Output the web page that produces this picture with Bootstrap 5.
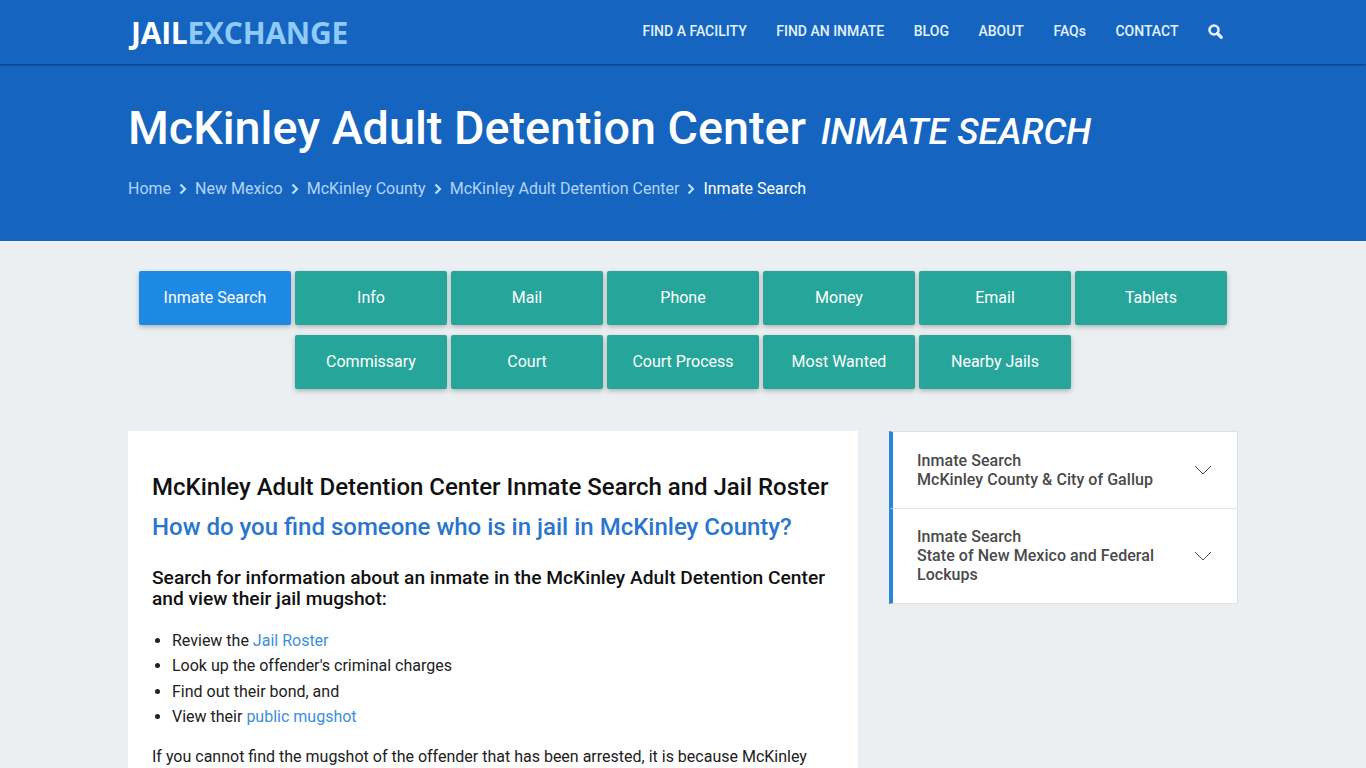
<!DOCTYPE html>
<html lang="en">

<head>
  <meta charset="UTF-8">
  <meta name="viewport" content="width=device-width, initial-scale=1.0">
  <title>McKinley Adult Detention Center Inmate Search</title>
  <link href="https://cdn.jsdelivr.net/npm/bootstrap@5.3.0/dist/css/bootstrap.min.css" rel="stylesheet">
  <style>
    body {
      font-family: Roboto, "Liberation Sans", sans-serif;
      font-size: 16px;
      line-height: 1.6;
      background: #eceff1;
      color: #212121;
    }
    .container {
      --bs-gutter-x: 30px;
    }
    .row {
      --bs-gutter-x: 30px;
    }
    .site-header {
      height: 64px;
      background: #1565c0;
      box-shadow: 0 1px 2px rgba(0, 0, 0, .45);
      position: relative;
    }
    .site-header .container {
      padding-bottom: 2px;
    }
    .site-logo {
      font-family: "Open Sans", sans-serif;
      font-weight: 700;
      font-size: 30px;
      line-height: 1;
      letter-spacing: -.25px;
      margin: 4px 0 0 3px;
      color: #fff;
      text-decoration: none;
    }
    .site-logo span {
      color: #90caf9;
    }
    .top-link {
      font-size: 14px;
      font-weight: 500;
      line-height: 20px;
      color: #e3f2fd;
      text-decoration: none;
      text-transform: uppercase;
    }
    .top-nav {
      gap: 29.5px;
      margin-right: 15px;
    }
    .top-nav .faq-link {
      text-transform: none;
    }
    .hero {
      height: 177px;
      background: #1565c0;
      padding-top: 35px;
    }
    .hero h1 {
      font-size: 46.7px;
      font-weight: 500;
      line-height: 58px;
      color: #fff;
      margin: 0 0 16px;
    }
    .hero h1 em {
      font-size: 36.1px;
      font-weight: 500;
      margin-left: 3px;
      text-transform: uppercase;
    }
    .crumbs {
      font-size: 16px;
      line-height: 24px;
      gap: 8px;
      color: #fff;
    }
    .crumbs a {
      color: #b3d4f7;
      text-decoration: none;
    }
    .tab-wrap {
      padding-top: 30px;
      gap: 10px 4px;
      width: 1100px;
      margin: 0 auto 42px;
    }
    .tab-btn {
      width: 152px;
      height: 54px;
      line-height: 54px;
      padding: 0;
      border: 0;
      border-radius: 2px;
      font-size: 16px;
      color: #fff;
      background: #26a69a;
      text-align: center;
      box-shadow: 0 2px 5px rgba(0, 0, 0, .26);
    }
    .tab-btn.current {
      background: #1e88e5;
    }
    .main-panel {
      background: #fff;
      padding: 41px 24px 20px;
    }
    .main-panel h2 {
      font-size: 24px;
      font-weight: 500;
      line-height: 30px;
      color: #111;
      margin: 0 0 9px;
    }
    .main-panel h3 {
      font-size: 24px;
      font-weight: 500;
      line-height: 32px;
      color: #2a75cf;
      margin: 0 0 24px;
    }
    .main-panel h4 {
      font-size: 19.2px;
      font-weight: 500;
      line-height: 21px;
      color: #111;
      margin: 0 0 18.5px;
    }
    .main-panel ul {
      padding-left: 20px;
      margin: 0 0 14.5px;
    }
    .main-panel li {
      line-height: 25.5px;
    }
    .main-panel a {
      color: #3b8ee0;
      text-decoration: none;
    }
    .side-list {
      --bs-list-group-border-radius: 0;
      --bs-list-group-border-color: #dee2e6;
      margin-left: 1px;
    }
    .side-item {
      display: flex;
      align-items: center;
      justify-content: space-between;
      padding: 18px 25px 19px 24px;
      border-left: 4px solid #2a86dc;
      font-size: 16px;
      font-weight: 500;
      line-height: 19px;
      letter-spacing: .05px;
      color: #4a4a4a;
    }
    .side-item:first-child {
      padding-top: 19px;
    }
    .side-item svg {
      flex: none;
      margin-left: 24px;
    }
  </style>
</head>

<body>
  <header class="site-header">
    <div class="container h-100 d-flex align-items-center justify-content-between">
      <a class="site-logo" href="#">JAIL<span>EXCHANGE</span></a>
      <nav class="top-nav d-flex align-items-center">
        <a class="top-link" href="#">Find a Facility</a>
        <a class="top-link" href="#">Find an Inmate</a>
        <a class="top-link" href="#">Blog</a>
        <a class="top-link" href="#">About</a>
        <a class="top-link faq-link" href="#">FAQs</a>
        <a class="top-link" href="#">Contact</a>
        <a class="top-link d-flex" href="#" aria-label="Search">
          <svg width="15" height="15" viewBox="0 0 15 15" fill="none" stroke="#e3f2fd">
            <circle cx="6" cy="6" r="4.5" stroke-width="2.6" />
            <path d="M9.5 9.5 13.3 13.3" stroke-width="3.2" stroke-linecap="round" />
          </svg>
        </a>
      </nav>
    </div>
  </header>

  <section class="hero">
    <div class="container">
      <h1>McKinley Adult Detention Center <em>Inmate Search</em></h1>
      <div class="crumbs d-flex align-items-center">
        <a href="#">Home</a>
        <svg width="8" height="12" viewBox="0 0 8 12" fill="none" stroke="#bbdefb" stroke-width="2.2"><path d="M1.5 1.5 6 6l-4.5 4.5" /></svg>
        <a href="#">New Mexico</a>
        <svg width="8" height="12" viewBox="0 0 8 12" fill="none" stroke="#bbdefb" stroke-width="2.2"><path d="M1.5 1.5 6 6l-4.5 4.5" /></svg>
        <a href="#">McKinley County</a>
        <svg width="8" height="12" viewBox="0 0 8 12" fill="none" stroke="#bbdefb" stroke-width="2.2"><path d="M1.5 1.5 6 6l-4.5 4.5" /></svg>
        <a href="#">McKinley Adult Detention Center</a>
        <svg width="8" height="12" viewBox="0 0 8 12" fill="none" stroke="#bbdefb" stroke-width="2.2"><path d="M1.5 1.5 6 6l-4.5 4.5" /></svg>
        <span>Inmate Search</span>
      </div>
    </div>
  </section>

  <div class="container">
    <div class="tab-wrap d-flex flex-wrap justify-content-center">
      <a class="tab-btn current text-decoration-none" href="#">Inmate Search</a>
      <a class="tab-btn text-decoration-none" href="#">Info</a>
      <a class="tab-btn text-decoration-none" href="#">Mail</a>
      <a class="tab-btn text-decoration-none" href="#">Phone</a>
      <a class="tab-btn text-decoration-none" href="#">Money</a>
      <a class="tab-btn text-decoration-none" href="#">Email</a>
      <a class="tab-btn text-decoration-none" href="#">Tablets</a>
      <a class="tab-btn text-decoration-none" href="#">Commissary</a>
      <a class="tab-btn text-decoration-none" href="#">Court</a>
      <a class="tab-btn text-decoration-none" href="#">Court Process</a>
      <a class="tab-btn text-decoration-none" href="#">Most Wanted</a>
      <a class="tab-btn text-decoration-none" href="#">Nearby Jails</a>
    </div>

    <div class="row">
      <div class="col-8">
        <div class="main-panel">
          <h2>McKinley Adult Detention Center Inmate Search and Jail Roster</h2>
          <h3>How do you find someone who is in jail in McKinley County?</h3>
          <h4>Search for information about an inmate in the McKinley Adult Detention Center and view their jail mugshot:</h4>
          <ul>
            <li>Review the <a href="#">Jail Roster</a></li>
            <li>Look up the offender's criminal charges</li>
            <li>Find out their bond, and</li>
            <li>View their <a href="#">public mugshot</a></li>
          </ul>
          <p>If you cannot find the mugshot of the offender that has been arrested, it is because McKinley County has not released it.</p>
        </div>
      </div>
      <div class="col-4">
        <div class="list-group side-list">
          <a class="list-group-item side-item" href="#">
            <span>Inmate Search<br>McKinley County &amp; City of Gallup</span>
            <svg width="18" height="10" viewBox="0 0 18 10" fill="none" stroke="#4a4a4a"><path d="M1 1l8 8 8-8" /></svg>
          </a>
          <a class="list-group-item side-item" href="#">
            <span>Inmate Search<br>State of New Mexico and Federal Lockups</span>
            <svg width="18" height="10" viewBox="0 0 18 10" fill="none" stroke="#4a4a4a"><path d="M1 1l8 8 8-8" /></svg>
          </a>
        </div>
      </div>
    </div>
  </div>

  <script src="https://cdn.jsdelivr.net/npm/bootstrap@5.3.0/dist/js/bootstrap.bundle.min.js"></script>
</body>

</html>
